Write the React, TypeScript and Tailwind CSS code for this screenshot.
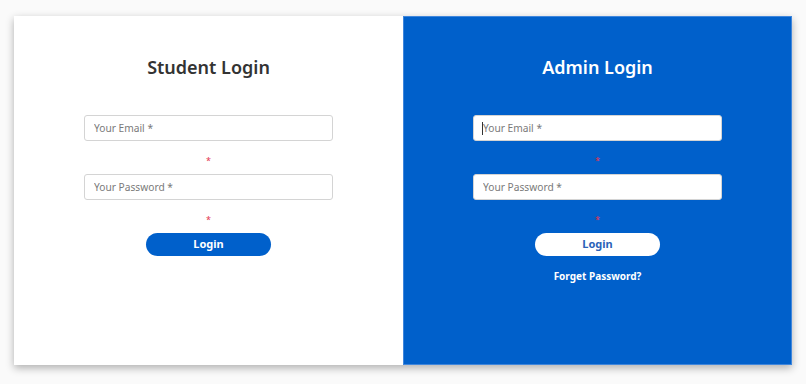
import React from "react";

function Field({ placeholder, type, caret }: { placeholder: string; type: string; caret?: boolean }) {
  return (
    <div className="relative w-[249px]">
      <input
        type={type}
        placeholder={placeholder}
        className="block w-full h-[26px] rounded-[3px] border border-[#d4d4d4] bg-white px-[9px] text-[10.2px] text-[#333] placeholder:text-[#7a7a7a] outline-none"
      />
      {caret && <span className="absolute left-[9px] top-[7px] h-[13px] w-px bg-[#333]" />}
    </div>
  );
}

function Star() {
  return <div className="h-[33px] pt-[6px] flex items-center justify-center text-[9px] leading-none text-[#e3344f]">*</div>;
}

export default function App() {
  return (
    <div className="w-[806px] h-[384px] bg-[#fafafa] pl-[14px] pt-[16px] font-['Noto_Sans',sans-serif]">
      <div className="flex w-[778px] h-[349px] shadow-[0_3px_8px_rgba(0,0,0,0.3)]">
        <div className="w-[389px] bg-white flex flex-col items-center pt-[39px]">
          <h2 className="h-[24px] leading-[24px] text-[18px] font-semibold text-[#333]">Student Login</h2>
          <div className="mt-[36px] flex flex-col items-center">
            <Field placeholder="Your Email *" type="email" />
            <Star />
            <Field placeholder="Your Password *" type="password" />
            <Star />
            <button className="w-[125px] h-[23px] rounded-full bg-[#0060cb] text-white text-[11px] font-bold">Login</button>
          </div>
        </div>
        <div className="w-[389px] bg-[#0060cb] border border-[#3f86dc] flex flex-col items-center pt-[38px]">
          <h2 className="h-[24px] leading-[24px] text-[18px] font-semibold text-white">Admin Login</h2>
          <div className="mt-[36px] flex flex-col items-center">
            <Field placeholder="Your Email *" type="email" caret />
            <Star />
            <Field placeholder="Your Password *" type="password" />
            <Star />
            <button className="w-[125px] h-[23px] rounded-full bg-white text-[#2a62b8] text-[11px] font-bold">Login</button>
            <a className="mt-[13px] leading-[14px] text-[10px] font-bold text-white">Forget Password?</a>
          </div>
        </div>
      </div>
    </div>
  );
}
